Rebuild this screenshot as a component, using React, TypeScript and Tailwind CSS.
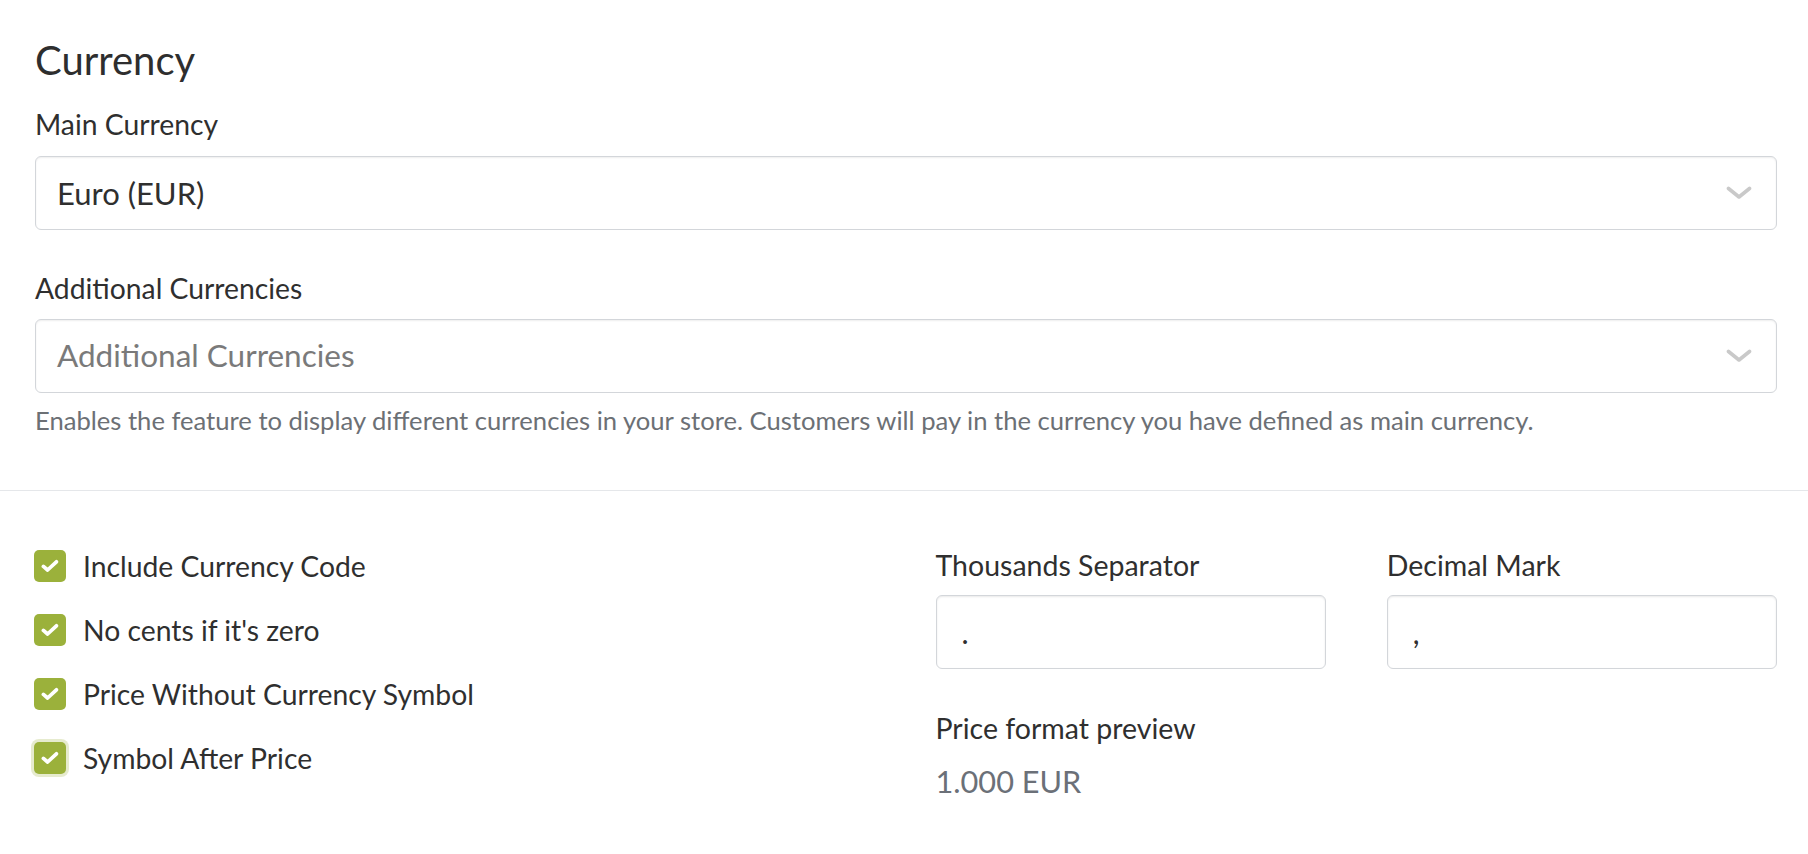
import React from "react";

const Chevron = () => (
  <svg width="26" height="14" viewBox="0 0 26 14" fill="none">
    <path d="M2.5 2.5 L13 11 L23.5 2.5" stroke="#c9c9c9" strokeWidth="3.6" strokeLinecap="round" strokeLinejoin="round" />
  </svg>
);

const Check = ({ ring }: { ring?: boolean }) => (
  <div
    className={
      "w-[32px] h-[32px] rounded-[5px] bg-[#9bb13b] flex items-center justify-center shrink-0 " +
      (ring ? "shadow-[0_0_0_3px_rgba(155,177,59,0.25)]" : "")
    }
  >
    <svg width="18" height="14" viewBox="0 0 18 14" fill="none">
      <path d="M2.4 7.4 L6.6 11 L15.4 2.8" stroke="#ffffff" strokeWidth="3.7" strokeLinecap="round" strokeLinejoin="round" />
    </svg>
  </div>
);

export default function App() {
  const checks = [
    "Include Currency Code",
    "No cents if it's zero",
    "Price Without Currency Symbol",
    "Symbol After Price",
  ];
  return (
    <div
      className="min-h-screen bg-white text-[#2f2f2f]"
      style={{ fontFamily: "Lato, 'Open Sans', sans-serif" }}
    >
      <div className="pl-[35px] pr-[31px] pt-[36px]">
        <h1 className="text-[40px] leading-[48px] font-normal text-[#2e2e2e]">Currency</h1>
        <div className="mt-[22px] text-[28.3px] leading-[36px]">Main Currency</div>
        <div className="mt-[14px] h-[74px] rounded-[6px] border border-[#d3d6da] shadow-[inset_0_1px_2px_rgba(0,0,0,0.07)] flex items-center justify-between pl-[21px] pr-[24px]">
          <span className="text-[31px] text-[#2f2f2f]">Euro (EUR)</span>
          <Chevron />
        </div>
        <div className="mt-[40px] text-[28.3px] leading-[36px]">Additional Currencies</div>
        <div className="mt-[13px] h-[74px] rounded-[6px] border border-[#d3d6da] shadow-[inset_0_1px_2px_rgba(0,0,0,0.07)] flex items-center justify-between pl-[21px] pr-[24px]">
          <span className="text-[31.5px] text-[#7a7a7a]">Additional Currencies</span>
          <Chevron />
        </div>
        <p className="mt-[12px] text-[25.6px] leading-[30px] text-[#6c7075]">
          Enables the feature to display different currencies in your store. Customers will pay in the currency you have defined as main currency.
        </p>
      </div>
      <div className="mt-[55px] h-px bg-[#e5e7ea]" />
      <div className="pl-[34px] pr-[31px] pt-[59px] grid grid-cols-2 gap-x-[60px]">
        <div className="flex flex-col gap-[32px]">
          {checks.map((c, i) => (
            <label key={c} className="flex items-center gap-[17px] h-[32px]">
              <Check ring={i === 3} />
              <span className="text-[28.3px] leading-[36px]">{c}</span>
            </label>
          ))}
        </div>
        <div className="-mt-[3px]">
          <div className="grid grid-cols-2 gap-x-[61px]">
            <div>
              <div className="text-[28.5px] leading-[36px]">Thousands Separator</div>
              <div className="mt-[12px] h-[74px] rounded-[6px] border border-[#d3d6da] shadow-[inset_0_1px_2px_rgba(0,0,0,0.09)] flex items-center pl-[25px] text-[30px]">.</div>
            </div>
            <div>
              <div className="text-[28.5px] leading-[36px]">Decimal Mark</div>
              <div className="mt-[12px] h-[74px] rounded-[6px] border border-[#d3d6da] shadow-[inset_0_1px_2px_rgba(0,0,0,0.09)] flex items-center pl-[25px] text-[30px]">,</div>
            </div>
          </div>
          <div className="mt-[41px] text-[28.5px] leading-[36px]">Price format preview</div>
          <div className="mt-[18px] text-[30.7px] leading-[36px] text-[#6b7078]">1.000 EUR</div>
        </div>
      </div>
    </div>
  );
}
